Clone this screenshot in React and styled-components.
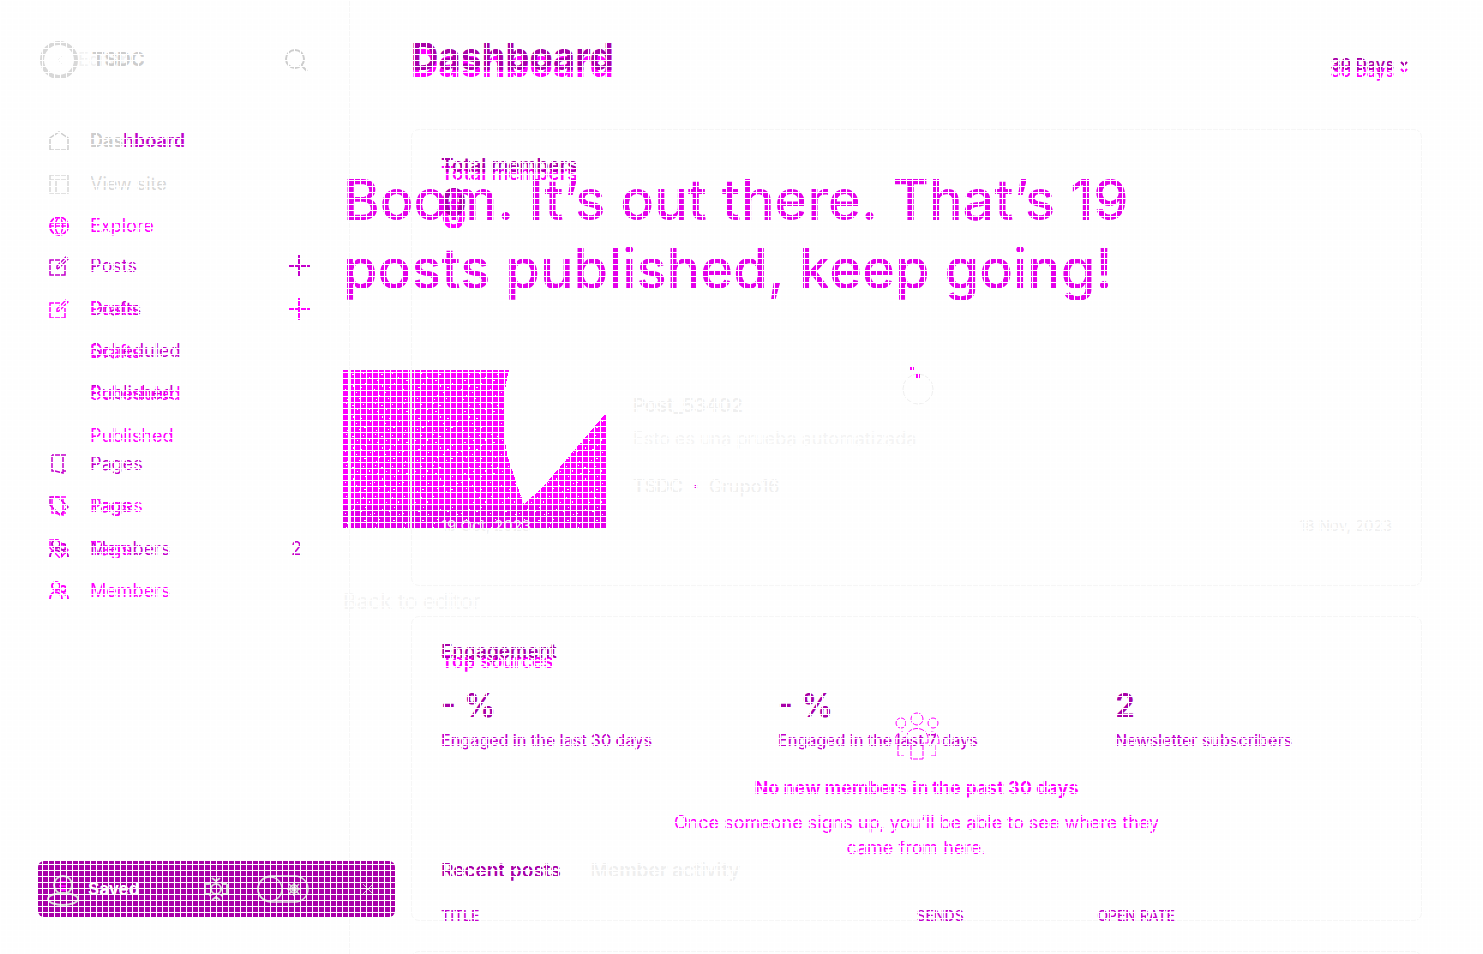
import React from "react";
import styled, { createGlobalStyle } from "styled-components";

const purple = "#a800a8";
const violet = "#c400cc";
const magenta = "#ff00ff";
const orchid = "#e400ea";
const grey = "#cdcdcd";
const pale = "#efefef";
const line = "#f6f6f6";

const Global = createGlobalStyle`
  * { box-sizing: border-box; }
  body { margin: 0; background: #fefefe; font-family: Inter, sans-serif; overflow: hidden; }
  h1, h2, h3, p, ul, dl, dd { margin: 0; padding: 0; }
  ul { list-style: none; }
  button { font: inherit; background: none; border: 0; padding: 0; color: inherit; }
  a { color: inherit; text-decoration: none; }
  svg { display: block; flex: none; }
`;

const Page = styled.div`
  display: grid;
  grid-template: 100vh / 1fr;
  overflow: hidden;
  > * { grid-area: 1 / 1; }
`;
const Shell = styled.div`
  display: flex;
  min-width: 0;
`;
const Mesh = styled.div`
  position: fixed;
  inset: 0;
  z-index: 5;
  pointer-events: none;
  background:
    repeating-linear-gradient(90deg, #fff 0 1px, transparent 1px 6px),
    repeating-linear-gradient(#fff 0 1px, transparent 1px 6px);
`;

const Sidebar = styled.aside`
  width: 350px;
  flex: none;
  border-right: 1px solid ${line};
  padding: 40px 38px;
`;
const BrandRow = styled.div`
  display: flex;
  justify-content: space-between;
  align-items: center;
  height: 40px;
  margin-bottom: 40px;
  color: ${grey};
`;
const BrandStack = styled.div`
  display: grid;
  align-items: center;
  > * { grid-area: 1 / 1; }
`;
const Back = styled.a`
  display: flex;
  align-items: center;
  gap: 14px;
  padding-left: 18px;
  font-size: 18px;
  line-height: 20px;
  color: #f2f2f2;
`;
const Brand = styled.div`
  display: flex;
  align-items: center;
  gap: 14px;
  padding-left: 2px;
  font-size: 19px;
  line-height: 20px;
  font-weight: 700;
`;
const Ring = styled.span`
  width: 38px;
  height: 38px;
  border: 4px solid #d8d8d8;
  border-radius: 50%;
`;
const NavStack = styled.nav`
  display: grid;
  > * { grid-area: 1 / 1; }
`;
const NavItem = styled.li`
  display: flex;
  align-items: center;
  height: 42px;
  margin-top: ${(p) => p.$gap || 0}px;
  padding-right: ${(p) => (p.$count ? 9 : 1)}px;
  color: ${(p) => p.$tone};
  font-size: 18px;
  line-height: 20px;
  font-weight: ${(p) => p.$weight || 400};
  a { flex: 1; display: flex; align-items: center; }
`;
const IconBox = styled.span`
  width: 41px;
  margin-left: 11px;
`;
const Soft = styled.span`
  color: ${grey};
`;

const Main = styled.main`
  flex: 1;
  min-width: 0;
  padding: 0 61px;
  display: flex;
  flex-direction: column;
`;
const Stack = styled.div`
  display: grid;
  > * { grid-area: 1 / 1; min-width: 0; }
`;
const Head = styled.header`
  display: flex;
  justify-content: space-between;
  align-items: flex-start;
  height: 129px;
  padding: ${(p) => (p.$low ? 43 : 36)}px 14px 0 0;
  color: ${(p) => p.$tone};
`;
const Title = styled.h1`
  font-size: 38px;
  line-height: 40px;
  font-weight: 700;
`;
const Period = styled.button`
  display: flex;
  align-items: center;
  gap: 6px;
  margin-top: 18px;
  font-size: 16px;
  line-height: 20px;
  font-weight: 600;
`;
const Card = styled.section`
  display: grid;
  flex: none;
  height: ${(p) => p.$h}px;
  margin-bottom: 30px;
  border: 1px solid ${line};
  border-radius: 8px;
  padding: 0 29px;
  > * { grid-area: 1 / 1; min-width: 0; }
`;
const Pane = styled.div`
  padding-top: ${(p) => p.$top}px;
  color: ${(p) => p.$tone};
`;
const Label = styled.h2`
  font-size: 19px;
  line-height: 24px;
  font-weight: 600;
`;
const Figure = styled.p`
  font-size: 38px;
  line-height: 40px;
  font-weight: 700;
  margin-top: ${(p) => p.$gap}px;
`;
const Dates = styled.div`
  position: relative;
  z-index: 2;
  align-self: end;
  display: flex;
  justify-content: space-between;
  padding-bottom: 49px;
  font-size: 15px;
  line-height: 20px;
  color: ${pale};
`;
const Stats = styled.dl`
  display: grid;
  grid-template-columns: repeat(3, 1fr);
  column-gap: 60px;
  margin-top: 22px;
`;
const Stat = styled.div`
  display: flex;
  flex-direction: column-reverse;
  justify-content: flex-end;
  dd { font-size: 32px; line-height: 40px; font-weight: 600; color: ${purple}; }
  dt { margin-top: 4px; font-size: 16px; line-height: 20px; font-weight: 500; color: ${violet}; white-space: nowrap; }
`;
const Tabs = styled.div`
  display: flex;
  gap: 30px;
  margin-top: 109px;
  font-size: 19px;
  line-height: 24px;
  font-weight: 600;
`;
const Tab = styled.button`
  color: ${(p) => (p.$on ? purple : pale)};
`;
const Table = styled.table`
  width: 100%;
  margin-top: 23px;
  border-collapse: collapse;
  table-layout: fixed;
  th {
    padding: 0;
    text-align: left;
    font-size: 14px;
    line-height: 20px;
    font-weight: 500;
    color: ${violet};
  }
`;
const Empty = styled.div`
  display: flex;
  flex-direction: column;
  align-items: center;
  margin-top: 38px;
  text-align: center;
  h3 { margin-top: 16px; font-size: 18px; line-height: 24px; font-weight: 700; }
  p { max-width: 500px; margin-top: 10px; font-size: 18px; line-height: 25px; font-weight: 400; }
`;

const Publish = styled.section`
  justify-self: center;
  width: 100%;
  max-width: 797px;
  padding-top: 166px;
  z-index: 1;
`;
const Boom = styled.h2`
  font-size: 56px;
  line-height: 69px;
  font-weight: 500;
  color: ${orchid};
`;
const Post = styled.article`
  display: flex;
  gap: 26px;
  margin: 66px 0 62px;
  color: ${pale};
`;
const PostText = styled.div`
  padding-top: 24px;
  h3 { font-size: 19px; line-height: 24px; font-weight: 600; }
  p { margin-top: 10px; font-size: 18px; line-height: 22px; color: #f4f4f4; }
`;
const Byline = styled.div`
  display: flex;
  gap: 10px;
  margin-top: 26px;
  font-size: 18px;
  line-height: 22px;
  b { font-weight: 600; }
  i { font-style: normal; font-weight: 700; color: ${orchid}; }
`;
const EditorLink = styled.a`
  font-size: 21px;
  line-height: 24px;
  color: #f4f4f4;
`;
const SpinnerBox = styled.div`
  margin: -4px 0 0 -46px;
`;

const Toast = styled.div`
  position: fixed;
  left: 38px;
  bottom: 37px;
  z-index: 3;
  width: 357px;
  height: 56px;
  padding: 0 20px 0 8px;
  border-radius: 6px;
  background: ${purple};
  display: flex;
  align-items: center;
  color: #d8d8d8;
`;
const ToastText = styled.span`
  width: 116px;
  margin-left: 8px;
  color: #fff;
  font-size: 17px;
  line-height: 20px;
  font-weight: 700;
`;
const ToastButton = styled.button`
  margin-left: ${(p) => p.$gap}px;
`;

const Svg = ({ size = 20, sw = 2, box = 20, children }) => (
  <svg width={size} height={size} viewBox={`0 0 ${box} ${box}`} fill="none" stroke="currentColor" strokeWidth={sw} aria-hidden="true">
    {children}
  </svg>
);
const icons = {
  home: <path d="M1 19V7L10 1l9 6v12Z" strokeWidth="1.5" />,
  site: <path d="M1 1h18v18H1ZM1 6h18M7 6v13" strokeWidth="1.5" />,
  globe: (
    <>
      <circle cx="10" cy="10" r="9" />
      <path d="M1 7h18M1 10h18M10 1C5 6 5 14 10 19M10 1c5 5 5 13 0 18" strokeWidth="1.5" />
    </>
  ),
  edit: <path d="M11 4H1v15h15V9M8 13v-3L17 1l2 2-9 9-2 1" strokeWidth="1.5" />,
  page: <path d="M3 1h14M3 1v16h3l8 2V3M14 17h3" strokeWidth="1.5" />,
  tag: <path d="M1 1h8l10 10-8 8L1 9ZM5 5h1" strokeWidth="1.5" />,
  people: (
    <>
      <circle cx="7" cy="5" r="4" />
      <circle cx="14" cy="8" r="3" />
      <path d="M1 18c0-9 11-9 12 0M14 13c3 0 5 2 5 5" />
    </>
  ),
};

const PlusButton = () => (
  <button aria-label="New post">
    <Svg size={22} box={22}><path d="M11 0v22M0 11h22" /></Svg>
  </button>
);
const Item = ({ icon, children, plus, count, ...rest }) => (
  <NavItem $count={count} {...rest}>
    <a href="#nav">
      <IconBox>{icon && <Svg>{icons[icon]}</Svg>}</IconBox>
      <span>{children}</span>
    </a>
    {plus && <PlusButton />}
    {count && <span>{count}</span>}
  </NavItem>
);

const Thumb = () => (
  <svg width="264" height="158" viewBox="0 0 264 158" aria-hidden="true" shapeRendering="crispEdges">
    <defs>
      <pattern id="grain" width="29" height="31" patternUnits="userSpaceOnUse">
        <path
          fill="#fff"
          d="M3 2h1v1h-1zM9 4h2v1h-2zM20 3h1v1h-1zM26 7h1v2h-1zM14 8h1v1h-1zM5 10h2v1h-2zM22 13h1v1h-1zM10 15h1v2h-1zM17 17h2v1h-2zM2 19h1v1h-1zM27 20h1v1h-1zM13 22h1v1h-1zM7 25h1v1h-1zM21 26h2v1h-2zM16 28h1v1h-1zM4 29h1v1h-1z"
        />
      </pattern>
      <path id="cut" d="M0 0H166C159 22 160 66 164 84L175 118 181 134 199 118 264 42V158H0Z" />
    </defs>
    <use href="#cut" fill={magenta} />
    <path d="M0 136H264V158H0Z" fill={orchid} />
    <use href="#cut" fill="url(#grain)" />
    <path d="M6 0h2v158H6zM67 0h2v158h-2z" fill="#f2f2f2" />
  </svg>
);

export default function App() {
  return (
    <>
      <Global />
      <Page>
        <Shell>
          <Sidebar>
            <BrandRow>
              <BrandStack>
                <Back href="#editor">
                  <Svg size={8} box={8} sw={1}><path d="M6 0 2 4l4 4" /></Svg>
                  Editor
                </Back>
                <Brand><Ring />TSDC</Brand>
              </BrandStack>
              <button aria-label="Search">
                <Svg size={26} box={26}>
                  <circle cx="10" cy="12" r="9" />
                  <path d="m16 18 6 6" />
                </Svg>
              </button>
            </BrandRow>
            <NavStack>
              <ul>
                <Item icon="home" $tone={grey} $weight={500}>Dashboard</Item>
                <Item icon="site" $tone="#d8d8d8" $gap={1}>View site</Item>
                <Item icon="edit" plus $tone={violet} $gap={40}>Posts</Item>
                <Item $tone={violet} $gap={1}>Drafts</Item>
                <Item $tone={violet}>Scheduled</Item>
                <Item $tone={violet}>Published</Item>
                <Item icon="page" $tone={violet} $gap={29}>Pages</Item>
                <Item icon="tag" $tone={violet}>Tags</Item>
                <Item icon="people" count="2" $tone={violet} $gap={1}>Members</Item>
              </ul>
              <ul>
                <Item $tone={violet} $weight={600}><Soft>Das</Soft>hboard</Item>
                <Item icon="globe" $tone={magenta} $gap={43}>Explore</Item>
                <Item icon="edit" plus $tone={magenta} $gap={41}>Posts</Item>
                <Item $tone={magenta} $gap={1}>Drafts</Item>
                <Item $tone={magenta}>Scheduled</Item>
                <Item $tone={magenta}>Published</Item>
                <Item icon="page" $tone={magenta} $gap={28}>Pages</Item>
                <Item icon="tag" $tone={magenta} $gap={1}>Tags</Item>
                <Item icon="people" $tone={magenta}>Members</Item>
              </ul>
            </NavStack>
          </Sidebar>
          <Main>
            <Stack>
              <Head $tone={magenta} $low>
                <Title>Dashboard</Title>
                <Period>30 Days<Svg size={8} box={8}><path d="m1 2 3 3 3-3" /></Svg></Period>
              </Head>
              <Head $tone={purple}>
                <Title>Dashboard</Title>
                <Period>30 Days<Svg size={8} box={8}><path d="m1 2 3 3 3-3" /></Svg></Period>
              </Head>
            </Stack>
            <Card $h={457}>
              <Pane $top={32} $tone={magenta}>
                <Label>Total members</Label>
                <Figure $gap={9}>0</Figure>
              </Pane>
              <Pane $top={24} $tone={purple}>
                <Label>Total members</Label>
                <Figure $gap={4}>0</Figure>
              </Pane>
              <Dates><span>19 Oct, 2023</span><span>18 Nov, 2023</span></Dates>
            </Card>
            <Card $h={305}>
              <Pane $top={33} $tone={magenta}>
                <Label>Top sources</Label>
                <Empty>
                  <Svg size={48} box={48} sw={1}>
                    <circle cx="24" cy="7" r="6" />
                    <circle cx="8" cy="11" r="5" />
                    <circle cx="40" cy="11" r="5" />
                    <path d="M13 31v-4c0-14 22-14 22 0v4h-5v16H18V31ZM10 20c-6 0-8 4-8 12h3v12h6M38 20c6 0 8 4 8 12h-3v12h-6" />
                  </Svg>
                  <h3>No new members in the past 30 days</h3>
                  <p>Once someone signs up, you’ll be able to see where they came from here.</p>
                </Empty>
              </Pane>
              <Pane $top={23} $tone={purple}>
                <Label>Engagement</Label>
                <Stats>
                  <Stat><dt>Engaged in the last 30 days</dt><dd>- %</dd></Stat>
                  <Stat><dt>Engaged in the last 7 days</dt><dd>- %</dd></Stat>
                  <Stat><dt>Newsletter subscribers</dt><dd>2</dd></Stat>
                </Stats>
                <Tabs>
                  <Tab $on>Recent posts</Tab>
                  <Tab>Member activity</Tab>
                </Tabs>
                <Table>
                  <colgroup><col width="50%" /><col width="19%" /><col /></colgroup>
                  <thead><tr><th>TITLE</th><th>SENDS</th><th>OPEN RATE</th></tr></thead>
                </Table>
              </Pane>
            </Card>
            <Card $h={120} />
          </Main>
        </Shell>
        <Publish>
          <Boom>Boom. It’s out there. That’s 19 posts published, keep going!</Boom>
          <Post>
            <Thumb />
            <PostText>
              <h3>Post_53402</h3>
              <p>Esto es una prueba automatizada</p>
              <Byline><b>TSDC</b><i>·</i><span>Grupo16</span></Byline>
            </PostText>
            <SpinnerBox>
              <Svg size={40} box={40} sw={1}>
                <circle cx="22" cy="23" r="15" />
                <path d="M14 1h4v3h-4zM20 8h4v4h-4z" fill={magenta} stroke="none" />
              </Svg>
            </SpinnerBox>
          </Post>
          <EditorLink href="#editor">Back to editor</EditorLink>
        </Publish>
        <Toast role="status">
          <Svg size={34} box={34}>
            <circle cx="17" cy="13" r="9" />
            <ellipse cx="17" cy="27" rx="15" ry="6" />
            <path d="M13 10h8M13 14h8M14 18h6" stroke={magenta} />
          </Svg>
          <ToastText>Saved</ToastText>
          <ToastButton $gap={0} aria-label="Settings">
            <Svg size={24} box={24}>
              <path d="m8 1 4 3 4-3M8 23l4-3 4 3M1 7h4l2-2M1 17h4l2 2M23 7h-4l-2-2M23 17h-4l-2 2M1 7v10M23 7v10" />
              <circle cx="12" cy="12" r="5" />
            </Svg>
          </ToastButton>
          <ToastButton $gap={29} aria-label="Night shift">
            <svg width="52" height="28" viewBox="0 0 52 28" fill="none" stroke="currentColor" strokeWidth="1.5">
              <rect x="1" y="1" width="50" height="26" rx="13" />
              <circle cx="13" cy="14" r="12" />
              <path d="M37 7v14M30 14h14M32 9l10 10M42 9 32 19" />
              <circle cx="37" cy="14" r="4" />
            </svg>
          </ToastButton>
          <ToastButton $gap={54} aria-label="Close">
            <Svg size={10} box={10} sw={1}><path d="m0 0 10 10M10 0 0 10" /></Svg>
          </ToastButton>
        </Toast>
      </Page>
      <Mesh />
    </>
  );
}
